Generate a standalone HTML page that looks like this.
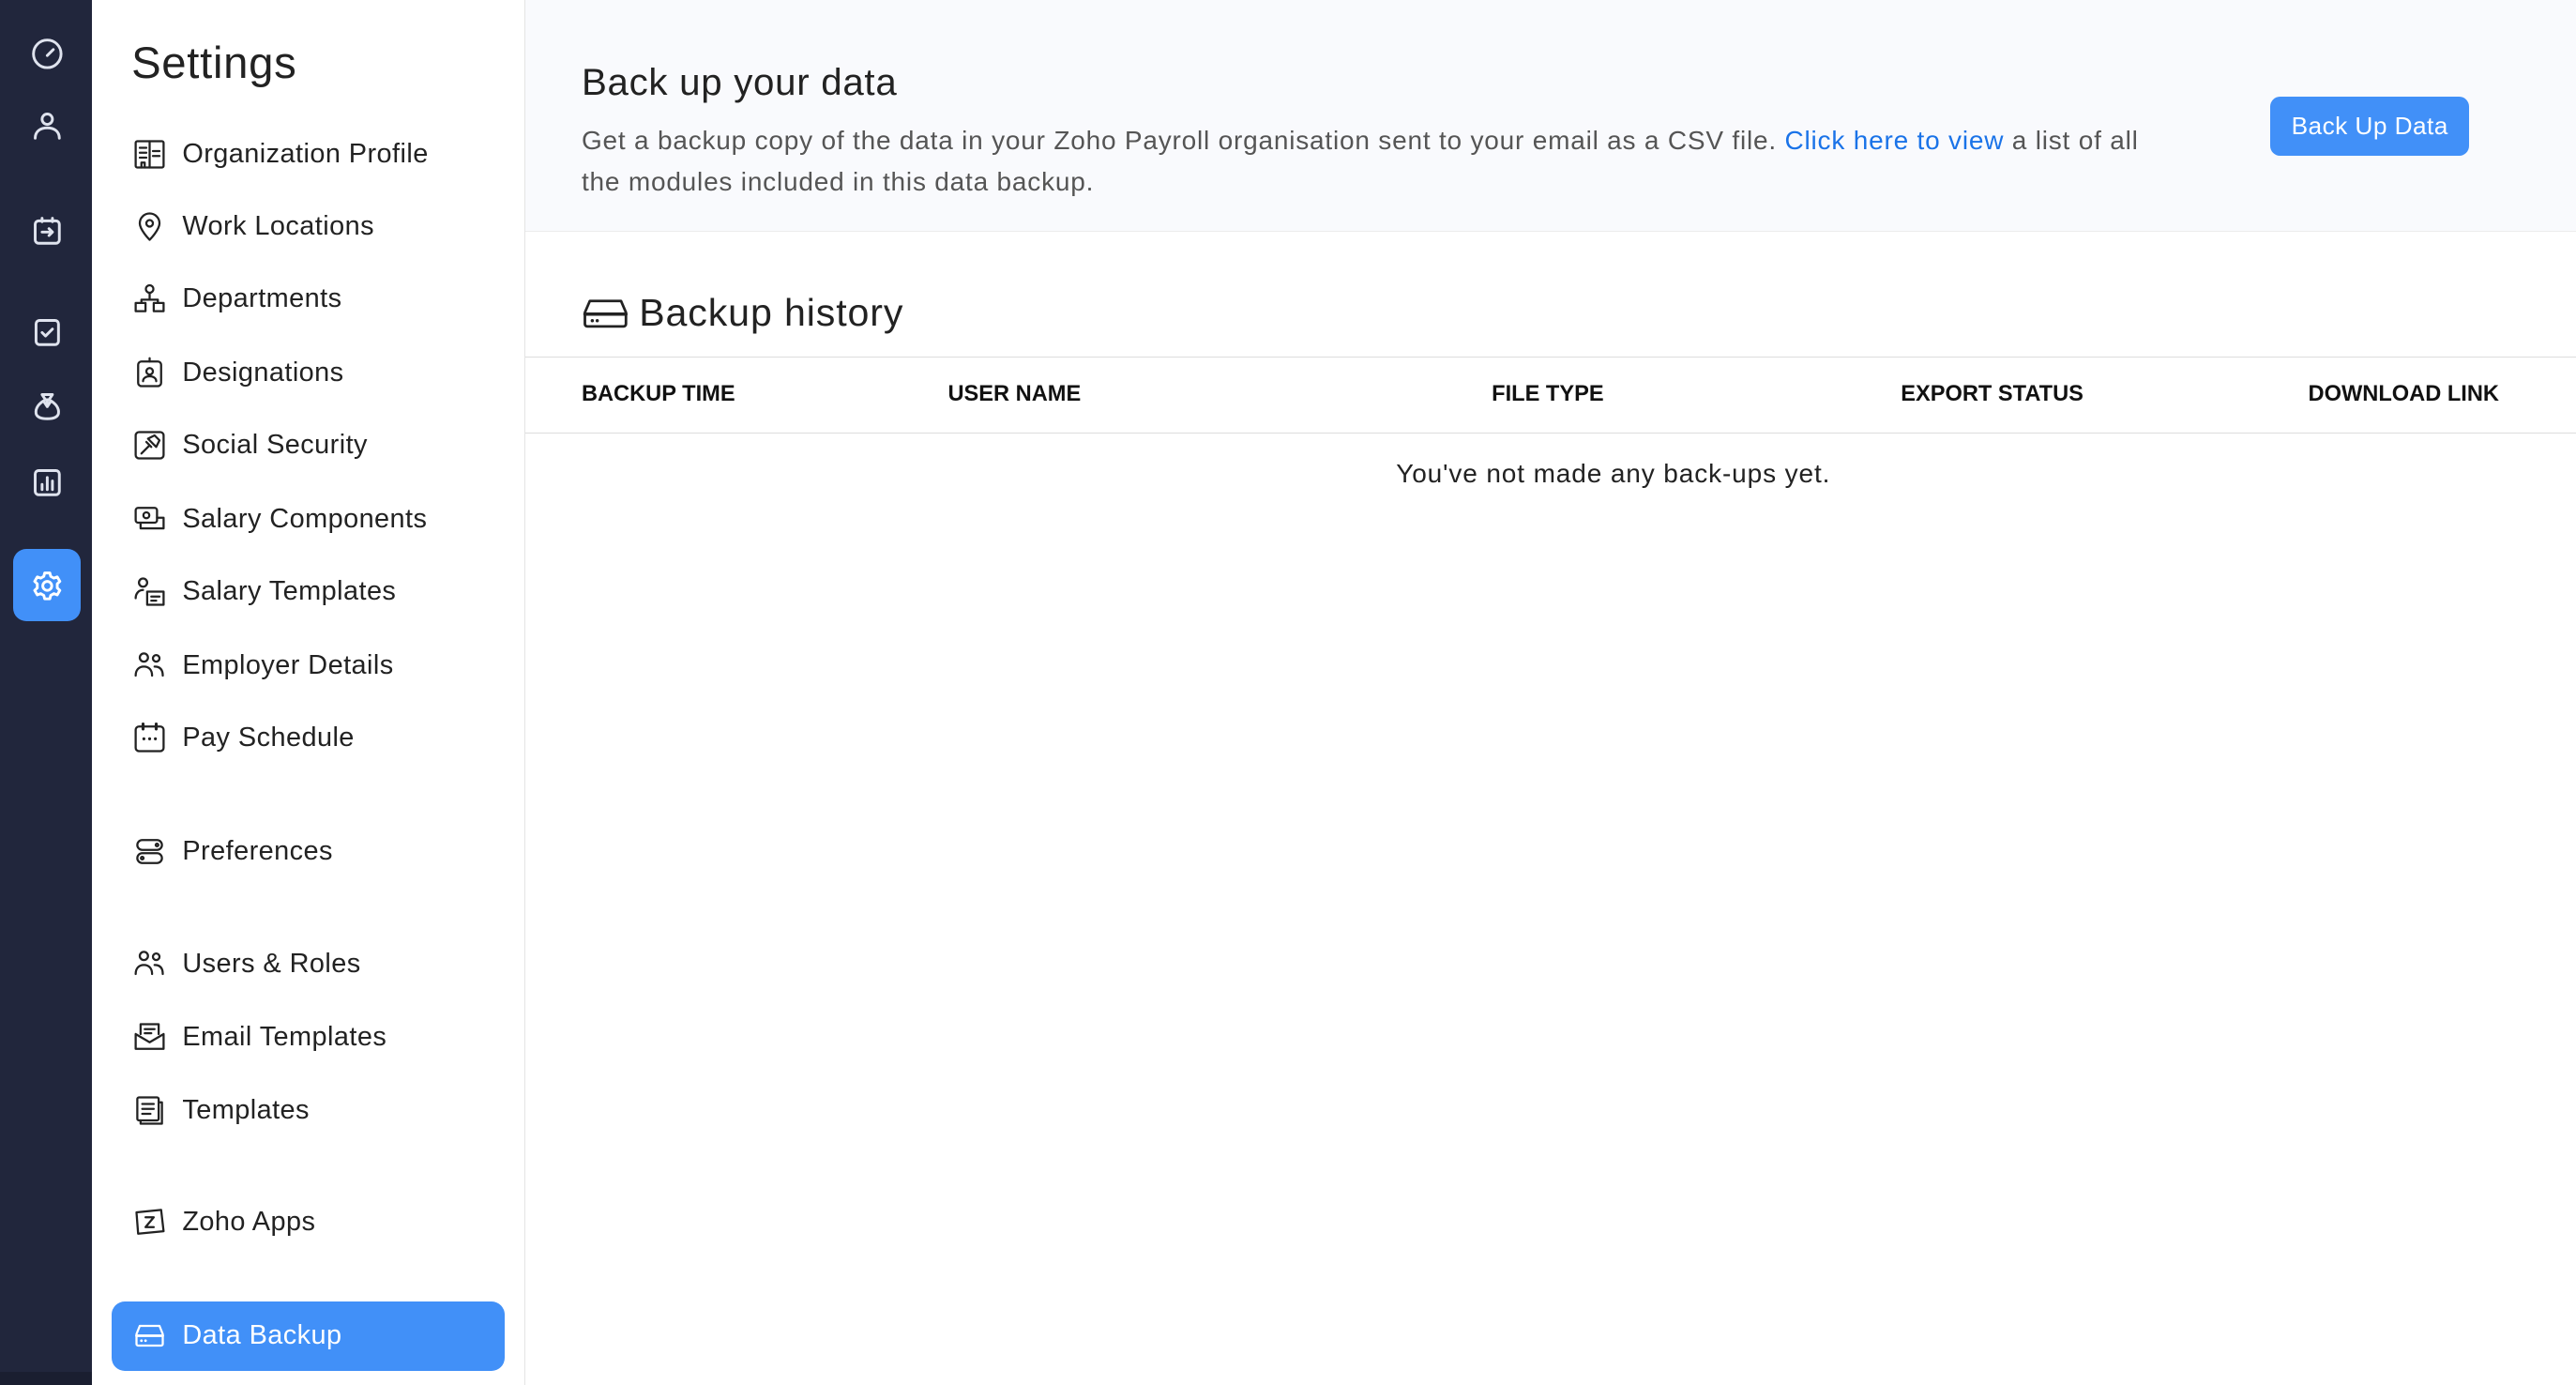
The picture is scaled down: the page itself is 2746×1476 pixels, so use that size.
<!DOCTYPE html>
<html><head><meta charset="utf-8"><style>
*{margin:0;padding:0;box-sizing:border-box}
html,body{width:2746px;height:1476px;overflow:hidden;background:#fff}
#root{zoom:1.75128;width:1568px;height:843px;position:relative;font-family:"Liberation Sans",sans-serif;color:#222;letter-spacing:0.25px}
#rail{position:absolute;left:0;top:0;width:56px;height:843px;background:#21263c}
#rail .bot{position:absolute;left:0;bottom:0;width:56px;height:8px;background:#1a1e30}
.ri{position:absolute;left:18px;width:21px;height:21px}
#act{position:absolute;left:8px;top:334px;width:41px;height:44px;background:#4190f8;border-radius:8px}
#side{position:absolute;left:56px;top:0;width:264px;height:843px;background:#fff;border-right:1px solid #e4e4e4}
#side h1{position:absolute;left:24px;top:23px;font-size:27px;font-weight:normal;color:#222;letter-spacing:0.4px}
.it{position:absolute;left:25px;height:24px;display:flex;align-items:center;font-size:16.5px;color:#222}
.it svg{width:20px;height:20px;margin-right:10px;flex:none}
#dbk{position:absolute;left:12px;top:792px;width:239px;height:42px;background:#4190f8;border-radius:8px}
#main{position:absolute;left:320px;top:0;right:0;height:843px}
#hdr{position:absolute;left:0;top:0;right:0;height:141px;background:#f9fafd;border-bottom:1px solid #ececec}
#hdr h2{position:absolute;left:34px;top:37px;font-size:23px;font-weight:normal;color:#222;letter-spacing:0.4px}
#hdr p{position:absolute;left:34px;top:73px;width:950px;font-size:16px;line-height:25px;color:#555;letter-spacing:0.45px}
#hdr p a{color:#1a73e8;text-decoration:none}
#btn{position:absolute;left:1062px;top:59px;width:121px;height:36px;background:#4190f8;color:#fff;border-radius:6px;font-size:15px;text-align:center;line-height:36px}
#bh{position:absolute;left:34px;top:177px;font-size:23.5px;display:flex;align-items:center;color:#222;letter-spacing:0.5px}
#bh svg{width:29px;height:24px;margin-right:6px}
#th{position:absolute;left:0;right:0;top:217px;height:47px;border-top:1px solid #ddd;border-bottom:1px solid #ddd;font-size:13.5px;font-weight:bold;color:#111;letter-spacing:0}
#th span{position:absolute;top:15px}
#empty{position:absolute;left:0;width:1324px;top:279px;text-align:center;font-size:16px;color:#222;letter-spacing:0.5px}
svg{fill:none;stroke-linecap:round;stroke-linejoin:round}
.k{stroke:#222;stroke-width:1.3}
</style></head><body><div id="root">
<div id="rail"><div class="bot"></div>
<div id="act"></div>
<svg class="ri" style="top:22px" viewBox="0 0 20 20" stroke="#dfe3ee" stroke-width="1.6"><circle cx="10" cy="10" r="8"/><path d="M10 11l3.5-3.5"/></svg>
<svg class="ri" style="top:66px" viewBox="0 0 20 20" stroke="#dfe3ee" stroke-width="1.6"><circle cx="10" cy="6" r="3"/><path d="M3 17c0-4 3-6 7-6s7 2 7 6"/></svg>
<svg class="ri" style="top:130px" viewBox="0 0 20 20" stroke="#dfe3ee" stroke-width="1.6"><rect x="3" y="4" width="14" height="13" rx="2"/><path d="M7 2.5v2M13 2.5v2M7 10.5h6M11 8.5l2 2-2 2"/></svg>
<svg class="ri" style="top:192px" viewBox="0 0 20 20" stroke="#dfe3ee" stroke-width="1.6"><rect x="3.5" y="3" width="13" height="14" rx="2"/><path d="M7 10l2 2 4-4"/></svg>
<svg class="ri" style="top:237px" viewBox="0 0 20 20" stroke="#dfe3ee" stroke-width="1.6"><path d="M7 3h6l-2 3h-2zM9 6C5 8 3 11 3.5 14c.5 2 2.5 3 6.5 3s6-1 6.5-3C17 11 15 8 11 6M10 6v4M8 7l2 3 2-3"/></svg>
<svg class="ri" style="top:283px" viewBox="0 0 20 20" stroke="#dfe3ee" stroke-width="1.6"><rect x="3" y="3" width="14" height="14" rx="2"/><path d="M7 14v-3M10 14V7M13 14v-5"/></svg>
<svg class="ri" style="top:346px" viewBox="0 0 20 20" stroke="#fff" stroke-width="1.6"><circle cx="10" cy="10" r="2.6"/><path d="M8.5 2.5h3l.5 2 1.8 1 2-.7 1.5 2.6-1.5 1.4v2.4l1.5 1.4-1.5 2.6-2-.7-1.8 1-.5 2h-3l-.5-2-1.8-1-2 .7-1.5-2.6 1.5-1.4V8.8L2.7 7.4l1.5-2.6 2 .7 1.8-1z"/></svg>
</div>
<div id="side"><h1>Settings</h1>
<div class="it" style="top:82px"><svg viewBox="0 0 20 20" class="k"><rect x="1.5" y="2" width="17" height="16" rx="1"/><path d="M10 2v16M4 6h4M4 9h4M4 12h4M12 8h4M12 11h4M5 18v-3h2v3"/></svg>Organization Profile</div>
<div class="it" style="top:126px"><svg viewBox="0 0 20 20" class="k"><path d="M10 18s-6-6-6-10a6 6 0 0112 0c0 4-6 10-6 10z"/><circle cx="10" cy="8" r="2"/></svg>Work Locations</div>
<div class="it" style="top:170px"><svg viewBox="0 0 20 20" class="k"><circle cx="10" cy="4" r="2.3"/><path d="M10 6.5v4M5 10.5h10M5 10.5v2M15 10.5v2"/><rect x="1.5" y="12.5" width="6" height="5"/><rect x="12.5" y="12.5" width="6" height="5"/></svg>Departments</div>
<div class="it" style="top:215px"><svg viewBox="0 0 20 20" class="k"><rect x="3" y="3" width="14" height="15" rx="2"/><path d="M10 1v2"/><circle cx="10" cy="9" r="2"/><path d="M6 15c0-2 2-3 4-3s4 1 4 3"/></svg>Designations</div>
<div class="it" style="top:259px"><svg viewBox="0 0 20 20" class="k"><rect x="1.5" y="2" width="17" height="16" rx="2"/><path d="M5 15l5-5M9 6l4-2 3 3-2 4zM8 8l3 3"/></svg>Social Security</div>
<div class="it" style="top:304px"><svg viewBox="0 0 20 20" class="k"><rect x="1.5" y="3" width="13" height="9" rx="1.5"/><circle cx="8" cy="7.5" r="1.8"/><path d="M4.5 12v3.5h14V9h-4"/></svg>Salary Components</div>
<div class="it" style="top:348px"><svg viewBox="0 0 20 20" class="k"><circle cx="6" cy="4.5" r="2.5"/><path d="M1.5 14c0-3 2-5 4.5-5"/><rect x="8.5" y="10" width="10" height="8"/><path d="M11 13h5M11 15.5h3"/></svg>Salary Templates</div>
<div class="it" style="top:393px"><svg viewBox="0 0 20 20" class="k"><circle cx="6.5" cy="5" r="2.5"/><circle cx="14" cy="5.5" r="2"/><path d="M1.5 16c0-3.5 2-5.5 5-5.5s5 2 5 5.5M13 10.5c3 0 5 1.5 5 5.5"/></svg>Employer Details</div>
<div class="it" style="top:437px"><svg viewBox="0 0 20 20" class="k"><rect x="1.5" y="3" width="17" height="15" rx="2"/><path d="M6 1.5v3M14 1.5v3M6.5 10.5h0M10 10.5h0M13.5 10.5h0" stroke-width="1.8"/></svg>Pay Schedule</div>
<div class="it" style="top:506px"><svg viewBox="0 0 20 20" class="k"><rect x="2.5" y="3" width="15" height="6" rx="3"/><rect x="2.5" y="11" width="15" height="6" rx="3"/><circle cx="14.5" cy="6" r=".8"/><circle cx="5.5" cy="14" r=".8"/></svg>Preferences</div>
<div class="it" style="top:575px"><svg viewBox="0 0 20 20" class="k"><circle cx="6.5" cy="5" r="2.5"/><circle cx="14" cy="5.5" r="2"/><path d="M1.5 16c0-3.5 2-5.5 5-5.5s5 2 5 5.5M13 10.5c3 0 5 1.5 5 5.5"/></svg>Users &amp; Roles</div>
<div class="it" style="top:619px"><svg viewBox="0 0 20 20" class="k"><path d="M4.5 8V2h11v6M1.5 8v9h17V8M1.5 8l8.5 5 8.5-5M7 5h6M7 7.5h4"/></svg>Email Templates</div>
<div class="it" style="top:664px"><svg viewBox="0 0 20 20" class="k"><rect x="2.5" y="2" width="13" height="14" rx="1"/><path d="M15.5 5h2v13h-13v-2M5.5 6h7M5.5 9h7M5.5 12h5"/></svg>Templates</div>
<div class="it" style="top:732px"><svg viewBox="0 0 20 20" class="k"><path d="M2 4l15-1.5 1.5 13L3 17z"/><path d="M7.5 7h5l-5 6h5"/></svg>Zoho Apps</div>
<div id="dbk"></div>
<div class="it" style="top:801px;color:#fff"><svg viewBox="0 0 20 20" stroke="#fff" stroke-width="1.3"><path d="M4 4h12l2 5v6a1 1 0 01-1 1H3a1 1 0 01-1-1V9z"/><path d="M2 10h16M5 13h0M7.5 13h0" stroke-width="1.6"/></svg>Data Backup</div>
</div>
<div id="main">
<div id="hdr"><h2>Back up your data</h2>
<p>Get a backup copy of the data in your Zoho Payroll organisation sent to your email as a CSV file. <a>Click here to view</a> a list of all the modules included in this data backup.</p>
<div id="btn">Back Up Data</div></div>
<div id="bh"><svg viewBox="0 0 29 24" stroke="#222" stroke-width="1.6"><path d="M5 5h19l3 7v7a1.5 1.5 0 01-1.5 1.5h-22A1.5 1.5 0 012 19v-7z"/><path d="M2 13h25M6.5 17h0M9.5 17h0" stroke-width="2"/></svg>Backup history</div>
<div id="th"><span style="left:34px">BACKUP TIME</span><span style="left:257px">USER NAME</span><span style="left:588px">FILE TYPE</span><span style="left:837px">EXPORT STATUS</span><span style="left:1085px">DOWNLOAD LINK</span></div>
<div id="empty">You've not made any back-ups yet.</div>
</div>
</div></body></html>
